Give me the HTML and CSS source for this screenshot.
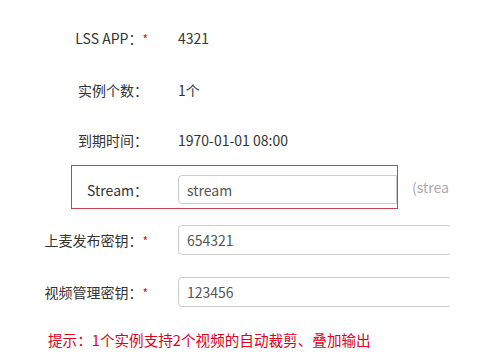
FILE: index.html
```html
<!DOCTYPE html>
<html lang="zh-CN">
<head>
  <meta charset="UTF-8" />
  <title>LSS APP</title>
  <link rel="stylesheet" href="styles.css">
</head>
<body>
  <form class="app-form">
    <div class="form-row row-first">
      <label class="form-label">LSS APP：<span class="req">*</span></label>
      <span class="form-value">4321</span>
    </div>
    <div class="form-row row-mid">
      <label class="form-label">实例个数：</label>
      <span class="form-value">1个</span>
    </div>
    <div class="form-row row-mid2">
      <label class="form-label">到期时间：</label>
      <span class="form-value">1970-01-01 08:00</span>
    </div>
    <div class="form-row row-stream">
      <div class="stream-box">
        <label class="form-label stream-label">Stream：</label>
        <input class="form-input stream-input" type="text" value="stream">
      </div>
      <span class="form-hint">(stream名称)</span>
    </div>
    <div class="form-row row-key1">
      <label class="form-label">上麦发布密钥：<span class="req">*</span></label>
      <input class="form-input" type="text" value="654321">
    </div>
    <div class="form-row row-key2">
      <label class="form-label">视频管理密钥：<span class="req">*</span></label>
      <input class="form-input" type="text" value="123456">
    </div>
    <p class="form-tip">提示：1个实例支持2个视频的自动裁剪、叠加输出</p>
  </form>
</body>
</html>
```

FILE: styles.css
```css
* { margin: 0; padding: 0; box-sizing: border-box; }
body {
  background: #fff;
  color: #333;
  font-family: "Noto Sans CJK JP", "Liberation Sans", sans-serif;
  font-size: 14px;
}
.app-form {
  width: 450px;
  overflow: hidden;
  padding-top: 23px;
}
.form-row {
  display: flex;
  align-items: center;
  height: 30px;
  white-space: nowrap;
}
.row-mid { margin-top: 22px; }
.row-mid2 { margin-top: 20px; }
.row-stream { margin-top: 10px; height: 44px; }
.row-key1 { margin-top: 16px; }
.row-key2 { margin-top: 22px; }
.form-label {
  width: 148px;
  flex-shrink: 0;
  text-align: right;
  line-height: 30px;
}
.req { color: #b0203a; font-size: 12px; }
.form-value {
  margin-left: 30px;
  line-height: 30px;
}
.form-input {
  margin-left: 30px;
  width: 274px;
  flex-shrink: 0;
  height: 30px;
  border: 1px solid #ccc;
  border-radius: 4px;
  padding: 0 8px;
  font: inherit;
  color: #555;
  outline: none;
}
.stream-box {
  display: flex;
  align-items: flex-start;
  flex-shrink: 0;
  margin-left: 71px;
  width: 327px;
  height: 44px;
  border: 1px solid #c9434f;
  padding-top: 9px;
  overflow: hidden;
}
.stream-label { width: 76px; }
.stream-input {
  width: 219px;
  height: 29px;
  border-top-right-radius: 0;
  border-bottom-right-radius: 0;
}
.form-hint {
  margin-left: 14px;
  color: #aaa;
}
.form-tip {
  margin-top: 23px;
  padding-left: 48px;
  color: #e0001b;
  font-size: 14.6px;
  line-height: 20px;
  white-space: nowrap;
}
```
